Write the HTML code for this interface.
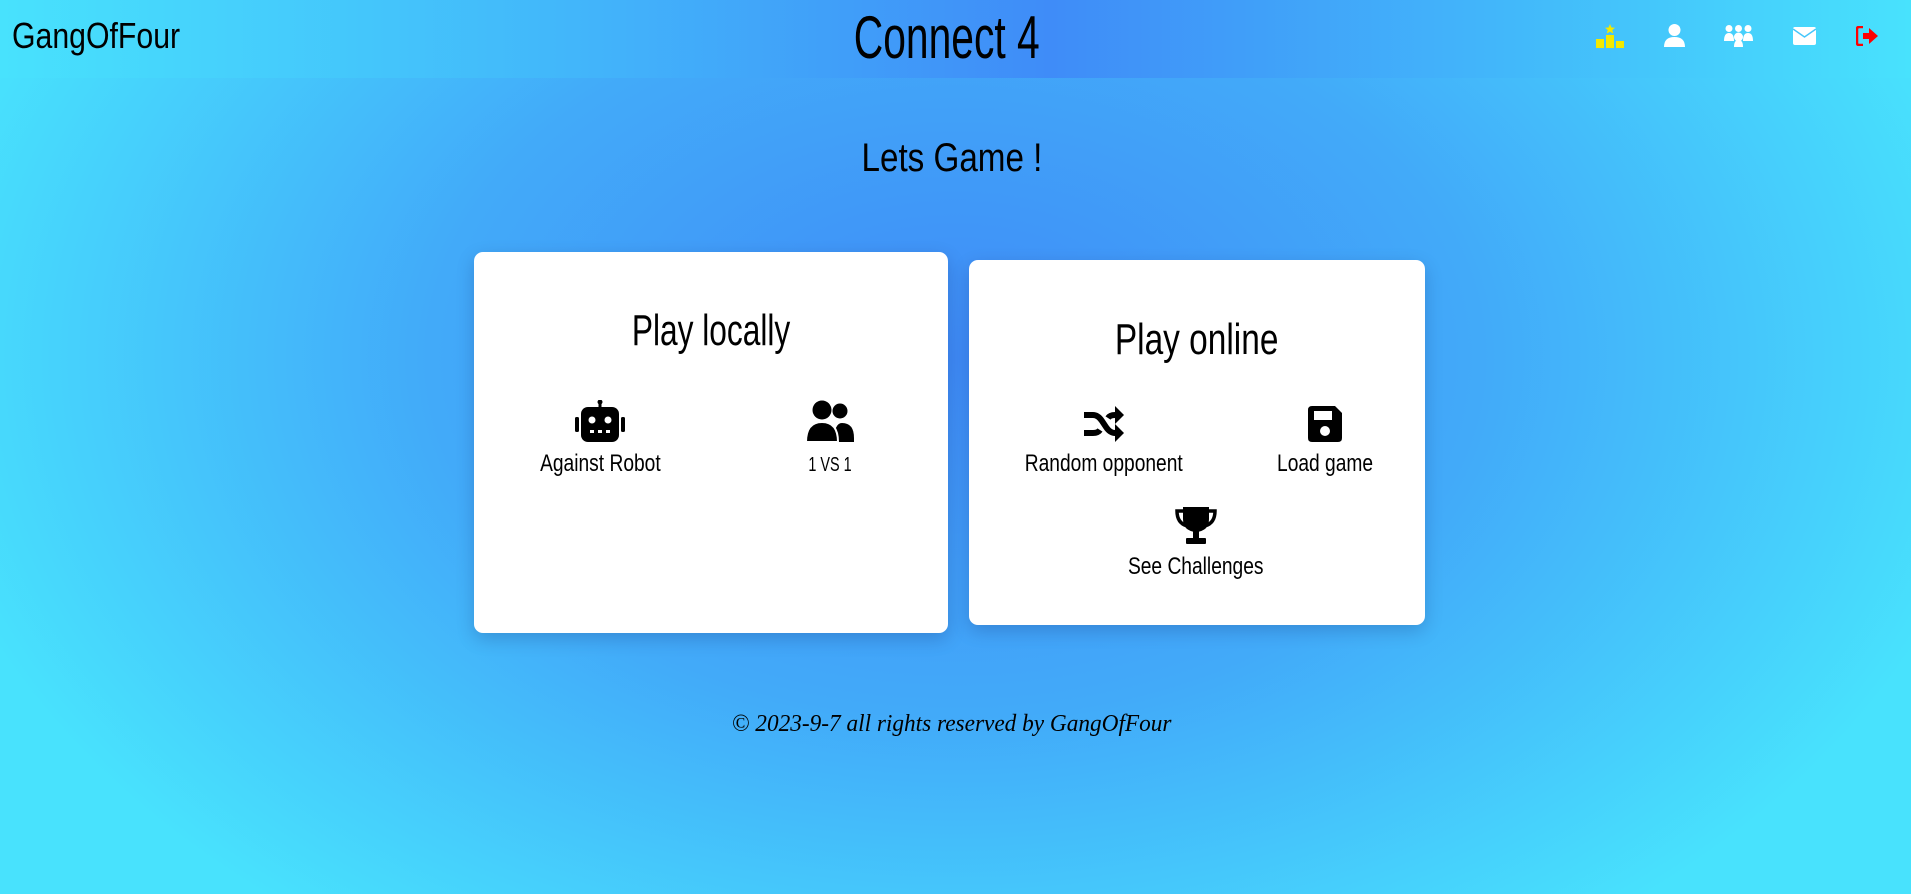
<!DOCTYPE html>
<html><head><meta charset="utf-8"><style>
*{margin:0;padding:0;box-sizing:border-box}
body{width:1911px;height:894px;overflow:hidden;position:relative;font-family:"Liberation Sans",sans-serif;color:#000;
background:radial-gradient(ellipse 55% 80% at 50% 40%,#3f8bf7 0%,#42aaf9 50%,#48e2fd 100%);}
.hdr{position:absolute;left:0;top:0;width:1911px;height:78px;background:linear-gradient(90deg,#48e2fd 0%,#42b6fa 30%,#3f8cf8 55%,#42b6fa 78%,#48e2fd 100%);}
.t{position:absolute;white-space:nowrap}
.s{display:inline-block;transform-origin:50% 50%}
.card{position:absolute;background:#fff;border-radius:9px;box-shadow:0 6px 18px rgba(0,0,60,.18)}
.it{position:absolute;text-align:center;width:240px;font-size:24px;white-space:nowrap}
.it svg{display:block;margin:0 auto 8px}
.it span{display:inline-block;transform:scaleX(.8)}
.nav svg{position:absolute}
</style></head><body>
<div class="hdr"></div>
<div class="t" style="left:12px;top:15px;font-size:36px;transform:scaleX(.84);transform-origin:0 50%">GangOfFour</div>
<div class="t" style="left:0;width:1893px;text-align:center;top:3px;font-size:60px"><span class="s" style="transform:scaleX(.68)">Connect 4</span></div>
<div class="nav">
<svg style="left:1596px;top:24px" width="28" height="24" viewBox="0 0 28 24"><polygon points="14,0 15.5,3.5 19,3.7 16.3,6 17.2,9.5 14,7.6 10.8,9.5 11.7,6 9,3.7 12.5,3.5" fill="#f3e900"/><rect x="0" y="15" width="8" height="9" fill="#f3e900"/><rect x="10" y="11" width="8" height="13" fill="#f3e900"/><rect x="20" y="17" width="8" height="7" fill="#f3e900"/></svg>
<svg style="left:1664px;top:24px" width="21" height="23" viewBox="0 0 21 23"><circle cx="10.5" cy="6" r="6" fill="#fff"/><path d="M0 23 Q0 13 10.5 13 Q21 13 21 23Z" fill="#fff"/></svg>
<svg style="left:1724px;top:25px" width="29" height="22" viewBox="0 0 29 22"><circle cx="5" cy="3.5" r="3.5" fill="#fff"/><circle cx="14.5" cy="3.5" r="3.5" fill="#fff"/><circle cx="24" cy="3.5" r="3.5" fill="#fff"/><path d="M0 16Q0 8 5 8Q10 8 10 16Z M19 16Q19 8 24 8Q29 8 29 16Z" fill="#fff"/><circle cx="14.5" cy="12" r="4.5" fill="#fff"/><path d="M10 22Q10 15 14.5 15Q19 15 19 22Z" fill="#fff"/></svg>
<svg style="left:1793px;top:27px" width="23" height="18" viewBox="0 0 23 18"><rect width="23" height="18" rx="2" fill="#fff"/><path d="M0 2 L11.5 10 L23 2" stroke="#45c6fb" stroke-width="1.5" fill="none"/></svg>
<svg style="left:1856px;top:26px" width="23" height="20" viewBox="0 0 23 20"><path d="M7 1H3Q1 1 1 3V17Q1 19 3 19H7" stroke="#f00" stroke-width="2.5" fill="none"/><path d="M7 7H13V2L22 10L13 18V13H7Z" fill="#f00"/></svg>
</div>
<div class="t" style="left:0;width:1904px;text-align:center;top:136px;font-size:40px"><span class="s" style="transform:scaleX(.83)">Lets Game !</span></div>

<div class="card" style="left:474px;top:252px;width:474px;height:381px"></div>
<div class="t" style="left:474px;width:474px;text-align:center;top:306px;font-size:44px"><span class="s" style="transform:scaleX(.72)">Play locally</span></div>
<div class="it" style="left:480px;top:400px"><svg width="50" height="42" viewBox="0 0 50 42"><rect x="23.5" y="0" width="3" height="8" fill="#000"/><circle cx="25" cy="2" r="2.5" fill="#000"/><rect x="6" y="7" width="38" height="35" rx="7" fill="#000"/><rect x="0" y="17" width="4" height="15" rx="1.5" fill="#000"/><rect x="46" y="17" width="4" height="15" rx="1.5" fill="#000"/><circle cx="17" cy="20" r="3.5" fill="#fff"/><circle cx="33" cy="20" r="3.5" fill="#fff"/><rect x="15" y="30" width="4" height="3" fill="#fff"/><rect x="23" y="30" width="4" height="3" fill="#fff"/><rect x="31" y="30" width="4" height="3" fill="#fff"/></svg><span>Against Robot</span></div>
<div class="it" style="left:710px;top:400px"><svg width="48" height="42" viewBox="0 0 48 42"><circle cx="16" cy="10" r="9.5" fill="#000"/><circle cx="34" cy="11" r="7.5" fill="#000"/><path d="M28 42Q28 23 36 23Q48 23 48 38V42Z" fill="#000"/><path d="M0 42Q0 22 16 22Q32 22 32 42Z" fill="#000" stroke="#fff" stroke-width="2"/></svg><span style="font-size:20px;transform:scaleX(.72)">1 VS 1</span></div>

<div class="card" style="left:969px;top:260px;width:456px;height:365px"></div>
<div class="t" style="left:969px;width:456px;text-align:center;top:315px;font-size:44px"><span class="s" style="transform:scaleX(.76)">Play online</span></div>
<div class="it" style="left:984px;top:406px"><svg width="40" height="36" viewBox="0 0 40 36"><path d="M0 9H9Q14 9 18 15L22 21Q26 27 31 27H34" stroke="#000" stroke-width="6" fill="none"/><path d="M0 27H9Q14 27 16 24M24 12Q26 9 31 9H34" stroke="#000" stroke-width="6" fill="none"/><path d="M31 0L40 9L31 18Z M31 18L40 27L31 36Z" fill="#000"/></svg><span>Random opponent</span></div>
<div class="it" style="left:1205px;top:406px"><svg width="34" height="36" viewBox="0 0 34 36"><path d="M4 0H27L34 7V32Q34 36 30 36H4Q0 36 0 32V4Q0 0 4 0Z" fill="#000"/><rect x="6" y="5" width="18" height="9" fill="#fff"/><circle cx="17" cy="25" r="5" fill="#fff"/></svg><span>Load game</span></div>
<div class="it" style="left:1076px;top:505px"><svg width="42" height="40" viewBox="0 0 42 40"><path d="M8 2H34V14Q34 26 21 27Q8 26 8 14Z" fill="#000"/><path d="M8 6H2Q2 18 12 21M34 6H40Q40 18 30 21" stroke="#000" stroke-width="3.5" fill="none"/><rect x="18" y="26" width="6" height="7" fill="#000"/><rect x="11" y="33" width="20" height="6" rx="1" fill="#000"/></svg><span>See Challenges</span></div>

<div class="t" style="left:0;width:1904px;text-align:center;top:711px;font-size:24px;font-family:'Liberation Serif',serif;font-style:italic"><span class="s" style="transform:scaleX(.97)">© 2023-9-7 all rights reserved by GangOfFour</span></div>
</body></html>
